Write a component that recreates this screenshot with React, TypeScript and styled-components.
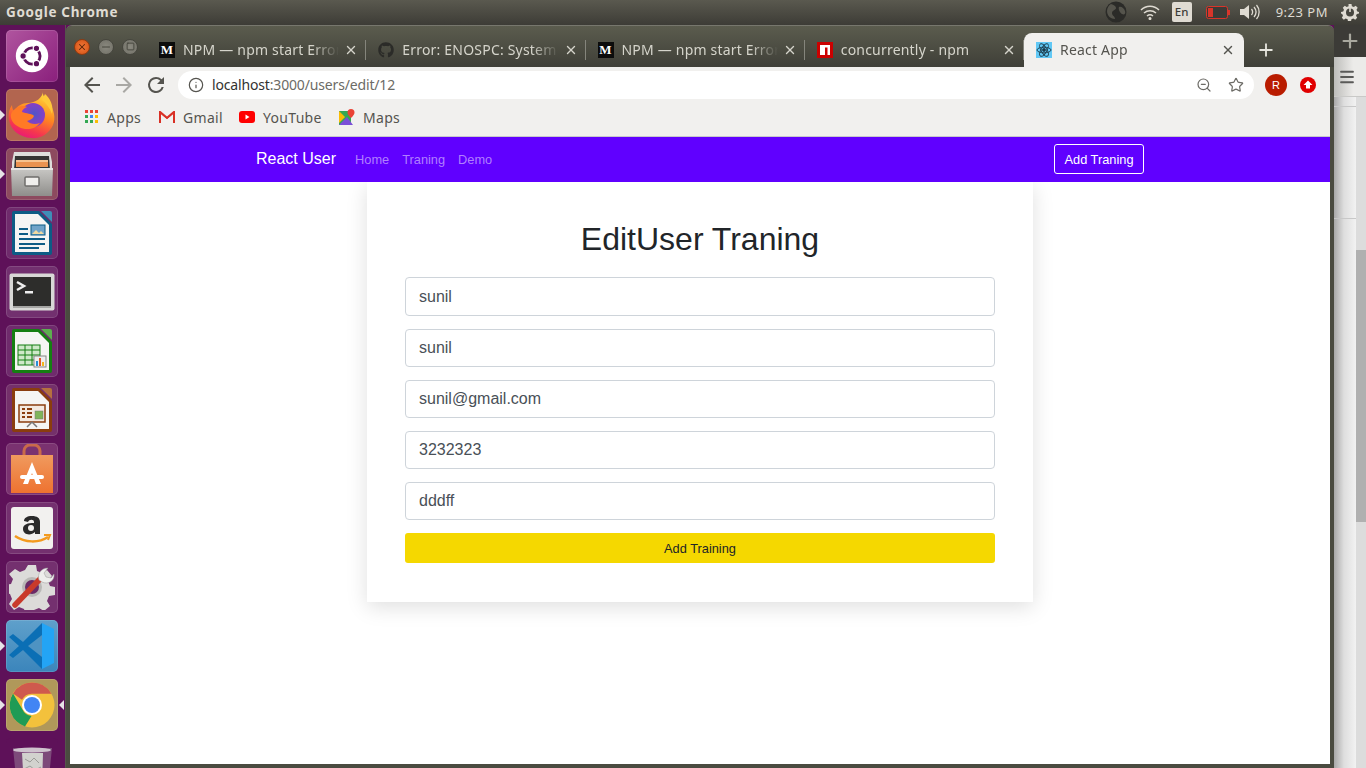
import React from 'react';
import styled, { createGlobalStyle } from 'styled-components';
import { Info, ZoomOut, Star, X, Plus, Menu, Minus, Square } from 'lucide-react';
import { FaGithub } from 'react-icons/fa';

const GlobalStyle = createGlobalStyle`
    html, body {
        margin: 0;
        padding: 0;
        height: 768px;
        overflow: hidden;
        background: #5e1159;
    }
    * {
        box-sizing: border-box;
    }
`;

const UI_FONT = `'Noto Sans', 'Open Sans', sans-serif`;
const WEB_FONT = `'Liberation Sans', Arial, sans-serif`;

/* ---------- desktop shell ---------- */

const Screen = styled.div`
    width: 1366px;
    height: 768px;
    display: flex;
    flex-flow: column;
    overflow: hidden;
`;

const TopBar = styled.header`
    height: 25px;
    flex: none;
    display: flex;
    align-items: center;
    justify-content: space-between;
    padding: 0 7px 1px 6px;
    background: linear-gradient(#5a594f, #3d3c36);
    color: #dfdbd2;
    font-family: ${UI_FONT};
`;

const AppName = styled.div`
    font-size: 13.5px;
    font-weight: 700;
    letter-spacing: 0.65px;
`;

const Tray = styled.div`
    display: flex;
    align-items: center;
`;

const TrayIcon = styled.svg<{ $mr: number }>`
    display: block;
    margin-right: ${(p) => p.$mr}px;
`;

const LangBadge = styled.div`
    width: 20px;
    height: 20px;
    margin-right: 14px;
    border-radius: 2px;
    background: #dfdbd2;
    color: #3c3b37;
    font-size: 11.5px;
    font-weight: 500;
    line-height: 20px;
    text-align: center;
`;

const Clock = styled.div`
    margin-right: 13px;
    font-size: 13px;
    letter-spacing: 0.5px;
`;

const Desktop = styled.div`
    flex: 1;
    display: flex;
    min-height: 0;
`;

const Dock = styled.nav`
    width: 66px;
    flex: none;
    display: flex;
    flex-flow: column;
    gap: 7px;
    padding: 5px 0 0 6px;
    overflow: hidden;
    background: #5e1159;
    border-right: 1px solid #55544c;
`;

const DockItem = styled.div<{ $bg: string; $left?: boolean; $right?: boolean; $bare?: boolean }>`
    position: relative;
    width: 52px;
    height: 52px;
    flex: none;
    display: flex;
    align-items: center;
    justify-content: center;
    border-radius: 5px;
    background: ${(p) => p.$bg};
    box-shadow: ${(p) => (p.$bare ? 'none' : 'inset 0 0 0 1px rgba(255, 255, 255, 0.13)')};

    &::before {
        content: '';
        display: ${(p) => (p.$left ? 'block' : 'none')};
        position: absolute;
        left: -6px;
        top: 21px;
        border: 5px solid transparent;
        border-left: 5px solid #e6e3e6;
    }
    &::after {
        content: '';
        display: ${(p) => (p.$right ? 'block' : 'none')};
        position: absolute;
        right: -6px;
        top: 21px;
        border: 5px solid transparent;
        border-right: 5px solid #e6e3e6;
    }
`;

/* ---------- chrome window ---------- */

const ChromeWindow = styled.section`
    width: 1268px;
    flex: none;
    display: flex;
    flex-flow: column;
    padding: 0 4px 4px 4px;
    background: #4a4b40;
    border-radius: 6px 6px 0 0;
    border-top: 1px solid #77776d;
`;

const TabStrip = styled.div`
    height: 41px;
    flex: none;
    display: flex;
    align-items: flex-end;
    margin: 0 -4px;
    padding: 0 4px;
    background: linear-gradient(#5b5c4e, #3f3f38);
    border-radius: 6px 6px 0 0;
    font-family: ${UI_FONT};
`;

const WindowButtons = styled.div`
    width: 77px;
    height: 100%;
    flex: none;
    display: flex;
    align-items: center;
    gap: 8px;
    padding: 0 0 0 4px;
`;

const WindowButton = styled.div<{ $close?: boolean }>`
    width: 16px;
    height: 16px;
    display: flex;
    align-items: center;
    justify-content: center;
    border-radius: 50%;
    color: ${(p) => (p.$close ? '#5a2408' : '#45453d')};
    background: ${(p) => (p.$close ? 'radial-gradient(#f0793a, #d24f12)' : 'radial-gradient(#8a897f, #706f66)')};
    border: 1px solid ${(p) => (p.$close ? '#8e3a10' : '#46463e')};
`;

const Tab = styled.div<{ $active?: boolean }>`
    position: relative;
    width: ${(p) => (p.$active ? '220px' : '219.25px')};
    height: 34px;
    flex: none;
    display: flex;
    align-items: center;
    padding: 0 ${(p) => (p.$active ? '9px' : '8px')} 0 12px;
    border-radius: 8px 8px 0 0;
    background: ${(p) => (p.$active ? '#f1f0ee' : 'transparent')};
    color: ${(p) => (p.$active ? '#55544f' : '#d5d4cb')};
    font-size: 14px;
    letter-spacing: 0.2px;

    &::after {
        content: '';
        display: ${(p) => (p.$active ? 'none' : 'block')};
        position: absolute;
        right: 0;
        top: 7px;
        width: 1px;
        height: 20px;
        background: #85857c;
    }
`;

const Favicon = styled.div<{ $bg: string }>`
    width: 16px;
    height: 16px;
    flex: none;
    display: flex;
    align-items: center;
    justify-content: center;
    margin-right: 8px;
    background: ${(p) => p.$bg};
    color: #fff;
`;

const MediumMark = styled.span`
    font-family: 'Liberation Serif', serif;
    font-size: 13px;
    font-weight: 700;
    line-height: 16px;
`;

const TabTitle = styled.div`
    flex: 1;
    margin-top: -2px;
    overflow: hidden;
    white-space: nowrap;
    -webkit-mask-image: linear-gradient(to right, #000 80%, transparent 97%);
    mask-image: linear-gradient(to right, #000 80%, transparent 97%);
`;

const TabClose = styled.div`
    width: 14px;
    flex: none;
    display: flex;
    justify-content: center;
`;

const NewTab = styled.div`
    height: 34px;
    flex: none;
    display: flex;
    align-items: center;
    margin-left: 12px;
    color: #e6e5de;
`;

const Toolbar = styled.div`
    height: 32px;
    flex: none;
    display: flex;
    align-items: flex-end;
    background: #f1f0ee;
    color: #55544f;
`;

const NavIcons = styled.div`
    width: 108px;
    height: 28px;
    flex: none;
    display: flex;
    align-items: center;
    gap: 8px;
    padding-left: 10px;
`;

const NavGlyph = styled.svg<{ $dim?: boolean }>`
    display: block;
    fill: ${(p) => (p.$dim ? '#a9a8a4' : '#55544f')};
`;

const UrlBar = styled.div`
    width: 1076px;
    height: 28px;
    flex: none;
    display: flex;
    align-items: center;
    padding: 0 10px 0 10px;
    border-radius: 14px;
    background: #fff;
`;

const UrlText = styled.div`
    flex: 1;
    margin: -2px 0 0 8px;
    font-family: ${UI_FONT};
    font-size: 14px;
    letter-spacing: -0.16px;
    color: #6c6b66;

    b {
        font-weight: 400;
        color: #33322f;
    }
`;

const UrlActions = styled.div`
    display: flex;
    align-items: center;
    gap: 16px;
    color: #6c6b66;
`;

const ProfileGroup = styled.div`
    height: 28px;
    flex: 1;
    display: flex;
    align-items: center;
    gap: 13px;
    padding-left: 11px;
`;

const Avatar = styled.div`
    width: 22px;
    height: 22px;
    border-radius: 50%;
    background: #b91c00;
    color: #fff;
    font-family: ${WEB_FONT};
    font-size: 11px;
    line-height: 22px;
    text-align: center;
`;

const Bookmarks = styled.div`
    height: 38px;
    flex: none;
    display: flex;
    align-items: center;
    padding: 0 0 1px 15px;
    background: #f1f0ee;
    color: #55544f;
    font-family: ${UI_FONT};
    font-size: 14px;
    letter-spacing: 0.3px;
    border-bottom: 1px solid #c8c7cc;
`;

const Bookmark = styled.div<{ $width: number }>`
    width: ${(p) => p.$width}px;
    flex: none;
    display: flex;
    align-items: center;
    gap: 8px;
`;

/* ---------- the react page ---------- */

const PageBody = styled.main`
    flex: 1;
    min-height: 0;
    overflow: hidden;
    background: #fff;
    font-family: ${WEB_FONT};
`;

const Navbar = styled.div`
    position: relative;
    z-index: 1;
    height: 45px;
    display: flex;
    align-items: center;
    padding: 0 186px 1px;
    background: #6000ff;
`;

const Brand = styled.div`
    margin-right: 19px;
    color: #fff;
    font-size: 16px;
`;

const NavLinks = styled.div`
    flex: 1;
    display: flex;
    gap: 13px;
    padding-top: 1px;
`;

const NavLink = styled.div`
    color: #b07fff;
    font-size: 12.8px;
`;

const NavButton = styled.div`
    width: 90px;
    height: 30px;
    border: 1px solid #fff;
    border-radius: 3px;
    color: #fff;
    font-size: 12.8px;
    line-height: 29px;
    text-align: center;
`;

const Card = styled.article`
    width: 666px;
    margin: 0 auto;
    padding: 38px 38px 39px;
    display: flex;
    flex-flow: column;
    background: #fff;
    box-shadow: 0 5px 20px rgba(0, 0, 0, 0.13);
`;

const Heading = styled.h2`
    margin: 0 0 19px;
    color: #212529;
    font-size: 32px;
    font-weight: 500;
    line-height: 38px;
    text-align: center;
`;

const Field = styled.div<{ $first?: boolean }>`
    height: ${(p) => (p.$first ? '39px' : '38px')};
    margin-bottom: 13px;
    padding-left: 13px;
    display: flex;
    align-items: center;
    border: 1px solid #ced4da;
    border-radius: 4px;
    color: #495057;
    font-size: 16px;
`;

const SubmitButton = styled.div`
    height: 30px;
    padding-top: 1px;
    border-radius: 3px;
    background: #f5d800;
    color: #212529;
    font-size: 12.8px;
    line-height: 30px;
    text-align: center;
`;

/* ---------- window peeking out behind chrome ---------- */

const BackWindow = styled.aside`
    flex: 1;
    display: flex;
    flex-flow: column;
    min-width: 0;
`;

const BackTabs = styled.div`
    height: 32px;
    flex: none;
    display: flex;
    align-items: center;
    justify-content: center;
    background: #3c3b37;
    color: #a9a89f;
`;

const BackToolbar = styled.div`
    height: 40px;
    flex: none;
    display: flex;
    align-items: center;
    padding-left: 4px;
    background: linear-gradient(to right, #bdbdba, #ecebe9 60%);
    border-bottom: 1px solid #c9c9c7;
    color: #5a5a58;
`;

const BackBody = styled.div`
    flex: 1;
    display: flex;
    min-height: 0;
`;

const BackPage = styled.div`
    flex: 1;
    background: linear-gradient(to right, #a8a8a8, #dedede 45%, #f2f2f2);
`;

const BackRow = styled.div`
    height: 112px;
    border-bottom: 1px solid #c8c8c8;

    &:first-child {
        height: 10px;
    }
`;

const BackScroll = styled.div`
    width: 10px;
    flex: none;
    background: #dcdcdc;
`;

const BackThumb = styled.div`
    height: 272px;
    margin-top: 153px;
    background: #b0b0b0;
`;

/* ---------- drawings ---------- */

const UbuntuIcon = () => (
    <svg width="34" height="34" viewBox="0 0 42 42">
        <circle cx="21" cy="21" r="20" fill="#fff" />
        <circle cx="21" cy="21" r="10" fill="none" stroke="#5e1159" strokeWidth="3.500" />
        <circle cx="10" cy="21" r="4" fill="#5e1159" stroke="#fff" strokeWidth="1.500" />
        <circle cx="26.500" cy="11.500" r="4" fill="#5e1159" stroke="#fff" strokeWidth="1.500" />
        <circle cx="26.500" cy="30.500" r="4" fill="#5e1159" stroke="#fff" strokeWidth="1.500" />
    </svg>
);

const FirefoxIcon = () => (
    <svg width="50" height="50" viewBox="0 0 50 50">
        <defs>
            <linearGradient id="ffa" x1="0.700" y1="0" x2="0.300" y2="1">
                <stop offset="0" stopColor="#ffdc3f" />
                <stop offset="0.450" stopColor="#ff8a1f" />
                <stop offset="0.800" stopColor="#f5364f" />
                <stop offset="1" stopColor="#e8177a" />
            </linearGradient>
            <radialGradient id="ffb" cx="0.550" cy="0.450" r="0.600">
                <stop offset="0" stopColor="#4f55c8" />
                <stop offset="1" stopColor="#9a38c4" />
            </radialGradient>
        </defs>
        <path d="M36 1c-1 5 3 8 6 12 5 6 7 15 4 22-4 9-13 14-22 13C13 47 4 41 2 30 1 24 2 19 5 15c0 3 1 5 2 6 3-5 8-8 14-8 7 0 15-5 15-12z" fill="url(#ffa)" />
        <circle cx="26" cy="25" r="12" fill="url(#ffb)" />
        <path d="M4 24c3-6 10-10 16-7-3 1-5 3-5 5 4 2 10 1 12 4-1 3-4 4-7 5 3 3 8 4 13 2-4 6-14 8-21 4-6-3-9-8-8-13z" fill="#ff7a26" />
        <path d="M38 4c5 4 9 12 7 20-2-6-6-11-10-14 1-2 2-4 3-6z" fill="#ffc93a" />
    </svg>
);

const FilesIcon = () => (
    <svg width="42" height="46" viewBox="0 0 42 46">
        <defs>
            <linearGradient id="fc" x1="0" y1="0" x2="0" y2="1">
                <stop offset="0" stopColor="#c9c8c5" />
                <stop offset="1" stopColor="#8f8e8b" />
            </linearGradient>
        </defs>
        <path d="M3 1h36l2 10v10H1V11z" fill="#dededb" />
        <path d="M4 5h34l1 14H3z" fill="#353533" />
        <rect x="5" y="9" width="32" height="2" fill="#f6c38f" />
        <rect x="5" y="11" width="32" height="5" fill="#ea9350" />
        <path d="M0 17h42l-1 28H1z" fill="url(#fc)" />
        <rect x="0" y="17" width="42" height="2" fill="#e6e5e2" />
        <rect x="14" y="26" width="14" height="9" rx="1" fill="#f0efec" stroke="#6f6e6b" strokeWidth="1.500" />
    </svg>
);

const OfficeIcon = ({ color, corner, children }: { color: string; corner: string; children: React.ReactNode }) => (
    <svg width="42" height="46" viewBox="0 0 42 46">
        <path d="M1 3a2 2 0 0 1 2-2h25l13 13v29a2 2 0 0 1-2 2H3a2 2 0 0 1-2-2z" fill={color} />
        <path d="M4 4h23l11 11v27H4z" fill="#f5f5f3" />
        <path d="M30 1h9a2 2 0 0 1 2 2v9z" fill={corner} />
        {children}
    </svg>
);

const WriterIcon = () => (
    <OfficeIcon color="#0d5c85" corner="#3f8eb8">
        <rect x="8" y="18" width="9" height="2" fill="#0d5c85" />
        <rect x="8" y="23" width="9" height="2" fill="#0d5c85" />
        <rect x="8" y="28" width="26" height="2" fill="#0d5c85" />
        <rect x="8" y="33" width="26" height="2" fill="#0d5c85" />
        <rect x="8" y="37" width="20" height="2" fill="#0d5c85" />
        <rect x="20" y="15" width="14" height="10" fill="#6fa4c9" stroke="#0d5c85" />
        <path d="M21 24l4-4 3 3 2-2 3 3z" fill="#f0d9a0" />
    </OfficeIcon>
);

const CalcIcon = () => (
    <OfficeIcon color="#157f12" corner="#5cae4f">
        <rect x="7" y="17" width="22" height="20" fill="#cfe9c9" stroke="#157f12" />
        <path d="M7 22h22M7 27h22M7 32h22M14 17v20M21 17v20" stroke="#157f12" fill="none" />
        <rect x="23" y="28" width="12" height="11" fill="#eee" stroke="#888" />
        <rect x="25" y="33" width="2" height="5" fill="#2a8ed6" />
        <rect x="28" y="30" width="2" height="8" fill="#e0562a" />
        <rect x="31" y="34" width="2" height="4" fill="#f2b61c" />
    </OfficeIcon>
);

const ImpressIcon = () => (
    <OfficeIcon color="#8a3d0e" corner="#b5703f">
        <rect x="8" y="18" width="26" height="17" fill="#f3e9df" stroke="#8a3d0e" strokeWidth="1.500" />
        <path d="M11 22h3M11 26h3M11 30h3M16 22h5M16 26h5M16 30h5" stroke="#8a3d0e" strokeWidth="2" />
        <rect x="24" y="24" width="8" height="8" fill="#7fb55a" stroke="#777" strokeWidth="0.500" />
        <path d="M21 35l-5 5M21 35l5 5" stroke="#777" strokeWidth="1.500" />
    </OfficeIcon>
);

const TerminalIcon = () => (
    <svg width="46" height="38" viewBox="0 0 46 38">
        <rect x="0.500" y="0.500" width="45" height="37" rx="2" fill="#d8d8d6" />
        <rect x="4" y="4" width="38" height="29" fill="#2d2d2b" />
        <rect x="4" y="33" width="38" height="2" fill="#a5a5a3" />
        <path d="M8 9l7 4-7 4" fill="none" stroke="#eee" strokeWidth="2.500" />
        <rect x="16" y="18" width="8" height="2.500" fill="#eee" />
    </svg>
);

const StoreIcon = () => (
    <svg width="42" height="50" viewBox="0 0 42 50">
        <defs>
            <linearGradient id="bag" x1="0" y1="0" x2="0" y2="1">
                <stop offset="0" stopColor="#f09a5e" />
                <stop offset="1" stopColor="#ee7230" />
            </linearGradient>
        </defs>
        <path d="M13 14V7a6 6 0 0 1 6-6h4a6 6 0 0 1 6 6v7" fill="none" stroke="#c96a4a" strokeWidth="3" />
        <path d="M0 11h42v38H0z" fill="url(#bag)" />
        <path d="M21 18l-9 22h5l4-11 4 11h5z" fill="#fff" />
        <rect x="9" y="31" width="24" height="4" rx="2" fill="#fff" />
    </svg>
);

const AmazonIcon = () => (
    <svg width="42" height="42" viewBox="0 0 42 42">
        <rect width="42" height="42" rx="3" fill="#f2f1ef" />
        <path d="M13 14c0-3 3-5 8-5s8 2 8 6v12h-5v-2c-4 4-12 3-12-3 0-5 5-6 11-6v-1c0-3-5-3-6 0z" fill="#2a2a2a" />
        <circle cx="20" cy="21" r="3" fill="#f2f1ef" />
        <path d="M4 29c10 7 24 7 33 1" fill="none" stroke="#f39a1e" strokeWidth="2.500" />
        <path d="M33 28l6 0-2 5" fill="none" stroke="#f39a1e" strokeWidth="2" />
    </svg>
);

const SettingsIcon = () => (
    <svg width="46" height="46" viewBox="0 0 46 46">
        <path d="M20 2h8l1 6 5 2 5-3 5 6-4 5 2 5 5 1v8l-6 1-2 5 3 5-6 5-5-3-5 2-1 5h-7l-2-6-5-2-5 3-5-6 3-5-2-5-5-1v-8l6-1 2-5-4-5 6-5 5 3 5-2z" fill="#dcdbd9" transform="translate(-1 -1)" />
        <circle cx="23" cy="23" r="10" fill="#b9b8b6" />
        <circle cx="23" cy="23" r="7" fill="#6b2a66" />
        <path d="M6 41L31 15" stroke="#c93a2a" strokeWidth="5.500" strokeLinecap="round" />
        <path d="M30 16c-2-6 2-12 9-12l-4 5 2 4 5 1 3-4c1 7-6 11-12 8z" fill="#eeeeec" stroke="#999" strokeWidth="0.500" />
    </svg>
);

const VsCodeIcon = () => (
    <svg width="46" height="48" viewBox="0 0 46 48">
        <path d="M33 1l12 6v34l-12 6z" fill="#23a4f5" />
        <path d="M33 1L14 20 4 12 0 15l10 9-10 9 4 3 10-8 19 19z" fill="#0b6fb5" />
        <path d="M33 13v22L19 24z" fill="#4e93c2" />
    </svg>
);

const ChromeIcon = () => (
    <svg width="46" height="46" viewBox="0 0 46 46">
        <circle cx="23" cy="23" r="22.500" fill="#f3c13c" />
        <path d="M23 .5a22.500 22.500 0 0 1 19.500 11.250H23a11 11 0 0 0-10 6L4 11.500A22.500 22.500 0 0 1 23 .5z" fill="#cf5a4d" />
        <path d="M4 11.500l9.500 16a11 11 0 0 0 9 6.500L16 44.500A22.500 22.500 0 0 1 4 11.500z" fill="#1f9b55" />
        <circle cx="23" cy="23" r="10" fill="#fff" />
        <circle cx="23" cy="23" r="8" fill="#4285f4" />
    </svg>
);

const TrashIcon = () => (
    <svg width="46" height="46" viewBox="0 0 46 46">
        <path d="M4 7h39l-4 39H8z" fill="#7d4a7a" />
        <ellipse cx="23" cy="9" rx="19" ry="2.500" fill="#cfc3ce" />
        <path d="M13 12h21l-1 34H15z" fill="#d2d2ce" />
        <path d="M16 18l5 3 4-4 5 5M15 28l6-3 5 4 6-3M17 38l5-4 4 3 5-3" stroke="#9c9c98" fill="none" />
    </svg>
);

const AppsGrid = () => (
    <svg width="14" height="14" viewBox="0 0 14 14">
        {['#ea4335', '#ea4335', '#ea4335', '#34a853', '#4285f4', '#fbbc04', '#34a853', '#34a853', '#fbbc04'].map((c, i) => (
            <rect key={i} x={(i % 3) * 5} y={Math.floor(i / 3) * 5} width="3" height="3" fill={c} />
        ))}
    </svg>
);

const GmailMark = () => (
    <svg width="16" height="12" viewBox="0 0 16 12">
        <path d="M0 12V0h1.500L8 5.500 14.500 0H16v12h-2V3.500L8 8.500 2 3.500V12z" fill="#d93025" />
        <path d="M2 3.500L8 8.500l6-5V12H2z" fill="#f1f0ee" />
    </svg>
);

const YoutubeMark = () => (
    <svg width="16" height="12" viewBox="0 0 16 12">
        <rect width="16" height="12" rx="3" fill="#f00" />
        <path d="M6.500 3.500v5l4-2.500z" fill="#fff" />
    </svg>
);

const MapsMark = () => (
    <svg width="16" height="16" viewBox="0 0 16 16">
        <path d="M0 2h12v14H0z" fill="#34a853" />
        <path d="M0 16l8-8 6 8z" fill="#7a4fd8" />
        <path d="M0 2l6 6-6 6z" fill="#fbbc04" />
        <path d="M12 0a3.500 3.500 0 0 1 3.500 3.500C15.500 6 12 9 12 9S8.500 6 8.500 3.500A3.500 3.500 0 0 1 12 0z" fill="#ea4335" />
    </svg>
);

const ReactAtom = () => (
    <svg width="16" height="16" viewBox="0 0 16 16" fill="none" stroke="#1c3b4a" strokeWidth="0.900">
        <ellipse cx="8" cy="8" rx="7" ry="2.800" />
        <ellipse cx="8" cy="8" rx="7" ry="2.800" transform="rotate(60 8 8)" />
        <ellipse cx="8" cy="8" rx="7" ry="2.800" transform="rotate(120 8 8)" />
        <circle cx="8" cy="8" r="1.400" fill="#1c3b4a" />
    </svg>
);

const NpmMark = () => (
    <svg width="16" height="16" viewBox="0 0 16 16">
        <rect width="16" height="16" fill="#cb0000" />
        <path d="M3 3h10v10h-2.500V5.500H8V13H3z" fill="#fff" />
    </svg>
);

const UploadBadge = () => (
    <svg width="16" height="16" viewBox="0 0 16 16">
        <circle cx="8" cy="8" r="8" fill="#e00000" />
        <path d="M8 3.500l4.500 4.500H10v3.500H6V8H3.500z" fill="#fff" />
    </svg>
);

const dockItems: { bg: string; icon: React.ReactNode; left?: boolean; right?: boolean; bare?: boolean }[] = [
    { bg: 'linear-gradient(135deg, #b0559f, #8a1f7c)', icon: <UbuntuIcon /> },
    { bg: '#b2654f', icon: <FirefoxIcon />, left: true },
    { bg: '#8d4a5f', icon: <FilesIcon />, left: true },
    { bg: '#6f2b6c', icon: <WriterIcon /> },
    { bg: '#72306f', icon: <TerminalIcon /> },
    { bg: '#6f2b6c', icon: <CalcIcon /> },
    { bg: '#74306a', icon: <ImpressIcon /> },
    { bg: '#7a3270', icon: <StoreIcon /> },
    { bg: '#74306f', icon: <AmazonIcon /> },
    { bg: '#74306f', icon: <SettingsIcon /> },
    { bg: 'linear-gradient(#5fa0cb, #3b85bb)', icon: <VsCodeIcon />, left: true },
    { bg: '#b0985a', icon: <ChromeIcon />, left: true, right: true },
    { bg: '#5e1159', icon: <TrashIcon />, bare: true },
];

const tabs: { title: string; bg: string; mark: React.ReactNode }[] = [
    { title: 'NPM — npm start Error', bg: '#0c0c0c', mark: <MediumMark>M</MediumMark> },
    { title: 'Error: ENOSPC: System', bg: 'transparent', mark: <FaGithub size={16} color="#2b2b28" /> },
    { title: 'NPM — npm start Error', bg: '#0c0c0c', mark: <MediumMark>M</MediumMark> },
    { title: 'concurrently - npm', bg: 'transparent', mark: <NpmMark /> },
];

const fields = ['sunil', 'sunil', 'sunil@gmail.com', '3232323', 'dddff'];

const App: React.FC = (): React.ReactElement => {
    return (
        <Screen>
            <GlobalStyle />
            <TopBar>
                <AppName>Google Chrome</AppName>
                <Tray>
                    <TrayIcon $mr={13} width="22" height="22" viewBox="0 0 22 22">
                        <circle cx="11" cy="11" r="10.500" fill="#2b2b28" />
                        <path d="M6 3c3 1 5 2 5 4s-4 2-4 5 3 3 3 6c-4 0-8-3-8-8 0-3 2-6 4-7zM14 6c2-1 5 1 6 4s-1 4-3 3-4-5-3-7z" fill="#55544c" />
                    </TrayIcon>
                    <TrayIcon $mr={12} width="20" height="15" viewBox="0 0 20 15" fill="none" stroke="#dfdbd2" strokeWidth="1.500">
                        <path d="M1 5c5-5 13-5 18 0M4 8c3.500-3 8.500-3 12 0M7 11c1.800-1.500 4.200-1.500 6 0" />
                        <circle cx="10" cy="13.500" r="0.800" fill="#dfdbd2" />
                    </TrayIcon>
                    <LangBadge>En</LangBadge>
                    <TrayIcon $mr={10} width="24" height="13" viewBox="0 0 24 13">
                        <rect x="0.500" y="0.500" width="21" height="12" rx="2" fill="#3c3b37" stroke="#d9352a" />
                        <rect x="2" y="2" width="5" height="9" fill="#d9352a" />
                        <rect x="22" y="4" width="2" height="5" fill="#d9352a" />
                    </TrayIcon>
                    <TrayIcon $mr={16} width="20" height="16" viewBox="0 0 20 16">
                        <path d="M0 5h4l5-4v14l-5-4H0z" fill="#dfdbd2" />
                        <path d="M11.500 5c1.500 2 1.500 4 0 6M14 3c2.500 3 2.500 7 0 10M16.500 1c3.500 4 3.500 10 0 14" fill="none" stroke="#dfdbd2" strokeWidth="1.300" />
                    </TrayIcon>
                    <Clock>9:23 PM</Clock>
                    <TrayIcon $mr={0} width="18" height="18" viewBox="0 0 18 18">
                        <path d="M7.500 1h3l.4 2.200 1.900.8 1.900-1.200 2 2-1.200 1.900.8 1.900L18 9v1.500l-2.200.4-.8 1.900 1.200 1.900-2 2-1.900-1.200-1.900.8-.4 2.200h-3l-.4-2.200-1.900-.8-1.900 1.200-2-2 1.200-1.900-.8-1.900L0 10.500V9l2.200-.4.8-1.900-1.200-1.900 2-2 1.900 1.200 1.900-.8z" fill="#dfdbd2" />
                        <circle cx="9" cy="9.500" r="4" fill="#47463f" />
                        <rect x="8.200" y="3" width="1.600" height="6" fill="#dfdbd2" />
                    </TrayIcon>
                </Tray>
            </TopBar>
            <Desktop>
                <Dock>
                    {dockItems.map((item, i) => (
                        <DockItem key={i} $bg={item.bg} $left={item.left} $right={item.right} $bare={item.bare}>
                            {item.icon}
                        </DockItem>
                    ))}
                </Dock>
                <ChromeWindow>
                    <TabStrip>
                        <WindowButtons>
                            <WindowButton $close>
                                <X size={10} strokeWidth={2.500} />
                            </WindowButton>
                            <WindowButton>
                                <Minus size={12} strokeWidth={2} />
                            </WindowButton>
                            <WindowButton>
                                <Square size={9} strokeWidth={2.500} />
                            </WindowButton>
                        </WindowButtons>
                        {tabs.map((tab, i) => (
                            <Tab key={i}>
                                <Favicon $bg={tab.bg}>{tab.mark}</Favicon>
                                <TabTitle>{tab.title}</TabTitle>
                                <TabClose>
                                    <X size={18} strokeWidth={2.400} />
                                </TabClose>
                            </Tab>
                        ))}
                        <Tab $active>
                            <Favicon $bg="#61c8f5">
                                <ReactAtom />
                            </Favicon>
                            <TabTitle>React App</TabTitle>
                            <TabClose>
                                <X size={18} strokeWidth={2.400} />
                            </TabClose>
                        </Tab>
                        <NewTab>
                            <Plus size={20} strokeWidth={2.200} />
                        </NewTab>
                    </TabStrip>
                    <Toolbar>
                        <NavIcons>
                            <NavGlyph width="24" height="24" viewBox="0 0 24 24">
                                <path d="M20 11H7.830l5.590-5.590L12 4l-8 8 8 8 1.410-1.410L7.830 13H20z" />
                            </NavGlyph>
                            <NavGlyph $dim width="24" height="24" viewBox="0 0 24 24">
                                <path d="M4 11h12.170l-5.590-5.590L12 4l8 8-8 8-1.410-1.410L16.170 13H4z" />
                            </NavGlyph>
                            <NavGlyph width="24" height="24" viewBox="0 0 24 24">
                                <path d="M17.650 6.350A7.960 7.960 0 0 0 12 4a8 8 0 1 0 7.730 10h-2.080A6 6 0 1 1 12 6c1.660 0 3.140.690 4.220 1.780L13 11h7V4z" />
                            </NavGlyph>
                        </NavIcons>
                        <UrlBar>
                            <Info size={16} strokeWidth={1.800} />
                            <UrlText>
                                <b>localhost</b>:3000/users/edit/12
                            </UrlText>
                            <UrlActions>
                                <ZoomOut size={16} strokeWidth={1.800} />
                                <Star size={16} strokeWidth={1.800} />
                            </UrlActions>
                        </UrlBar>
                        <ProfileGroup>
                            <Avatar>R</Avatar>
                            <UploadBadge />
                        </ProfileGroup>
                    </Toolbar>
                    <Bookmarks>
                        <Bookmark $width={74}>
                            <AppsGrid />
                            Apps
                        </Bookmark>
                        <Bookmark $width={80}>
                            <GmailMark />
                            Gmail
                        </Bookmark>
                        <Bookmark $width={100}>
                            <YoutubeMark />
                            YouTube
                        </Bookmark>
                        <Bookmark $width={80}>
                            <MapsMark />
                            Maps
                        </Bookmark>
                    </Bookmarks>
                    <PageBody>
                        <Navbar>
                            <Brand>React User</Brand>
                            <NavLinks>
                                <NavLink>Home</NavLink>
                                <NavLink>Traning</NavLink>
                                <NavLink>Demo</NavLink>
                            </NavLinks>
                            <NavButton>Add Traning</NavButton>
                        </Navbar>
                        <Card>
                            <Heading>EditUser Traning</Heading>
                            {fields.map((value, i) => (
                                <Field key={i} $first={i === 0}>
                                    {value}
                                </Field>
                            ))}
                            <SubmitButton>Add Training</SubmitButton>
                        </Card>
                    </PageBody>
                </ChromeWindow>
                <BackWindow>
                    <BackTabs>
                        <Plus size={22} strokeWidth={2.400} />
                    </BackTabs>
                    <BackToolbar>
                        <Menu size={18} strokeWidth={2.400} />
                    </BackToolbar>
                    <BackBody>
                        <BackPage>
                            <BackRow />
                            <BackRow />
                        </BackPage>
                        <BackScroll>
                            <BackThumb />
                        </BackScroll>
                    </BackBody>
                </BackWindow>
            </Desktop>
        </Screen>
    );
};

export default App;
